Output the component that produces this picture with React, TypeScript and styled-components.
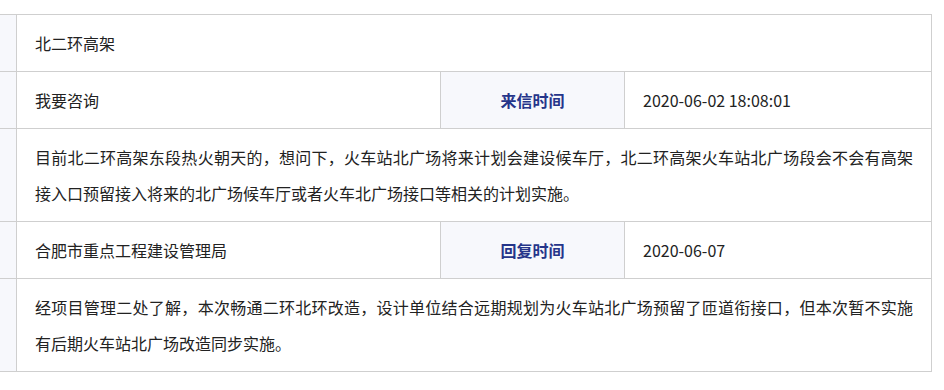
import React from "react";
import styled, { createGlobalStyle } from "styled-components";

const GlobalStyle = createGlobalStyle`
  body {
    margin: 0;
    background: #fff;
    font-family: "Microsoft YaHei", "Noto Sans CJK SC", "Noto Sans", sans-serif;
  }
`;

const Page = styled.div`
  padding-top: 14px;
`;

const Table = styled.div`
  width: 932px;
  display: grid;
  grid-template-columns: 16px 424px 184px 307px;
  border-top: 1px solid #cfcfcf;
  border-right: 1px solid #cfcfcf;
  box-sizing: border-box;
`;

const Side = styled.div`
  background: #f7f8fc;
  border-bottom: 1px solid #cfcfcf;
`;

const Cell = styled.div<{ $span?: number; $label?: boolean }>`
  grid-column: span ${(p) => p.$span || 1};
  box-sizing: border-box;
  padding: 10px 18px;
  border-left: 1px solid #cfcfcf;
  border-bottom: 1px solid #cfcfcf;
  font-size: 16px;
  line-height: 36px;
  color: ${(p) => (p.$label ? "#25358a" : "#222")};
  font-weight: ${(p) => (p.$label ? 700 : 400)};
  text-align: ${(p) => (p.$label ? "center" : "justify")};
  background: ${(p) => (p.$label ? "#f7f8fc" : "#fff")};
`;

const rows = [
  { full: "北二环高架" },
  { text: "我要咨询", label: "来信时间", value: "2020-06-02 18:08:01" },
  {
    full:
      "目前北二环高架东段热火朝天的，想问下，火车站北广场将来计划会建设候车厅，北二环高架火车站北广场段会不会有高架接入口预留接入将来的北广场候车厅或者火车北广场接口等相关的计划实施。",
  },
  { text: "合肥市重点工程建设管理局", label: "回复时间", value: "2020-06-07" },
  {
    full:
      "经项目管理二处了解，本次畅通二环北环改造，设计单位结合远期规划为火车站北广场预留了匝道衔接口，但本次暂不实施有后期火车站北广场改造同步实施。",
  },
];

export default function App() {
  return (
    <Page>
      <GlobalStyle />
      <Table>
        {rows.map((r, i) => (
          <React.Fragment key={i}>
            <Side />
            {r.full ? (
              <Cell $span={3}>{r.full}</Cell>
            ) : (
              <>
                <Cell>{r.text}</Cell>
                <Cell $label>{r.label}</Cell>
                <Cell>{r.value}</Cell>
              </>
            )}
          </React.Fragment>
        ))}
      </Table>
    </Page>
  );
}
